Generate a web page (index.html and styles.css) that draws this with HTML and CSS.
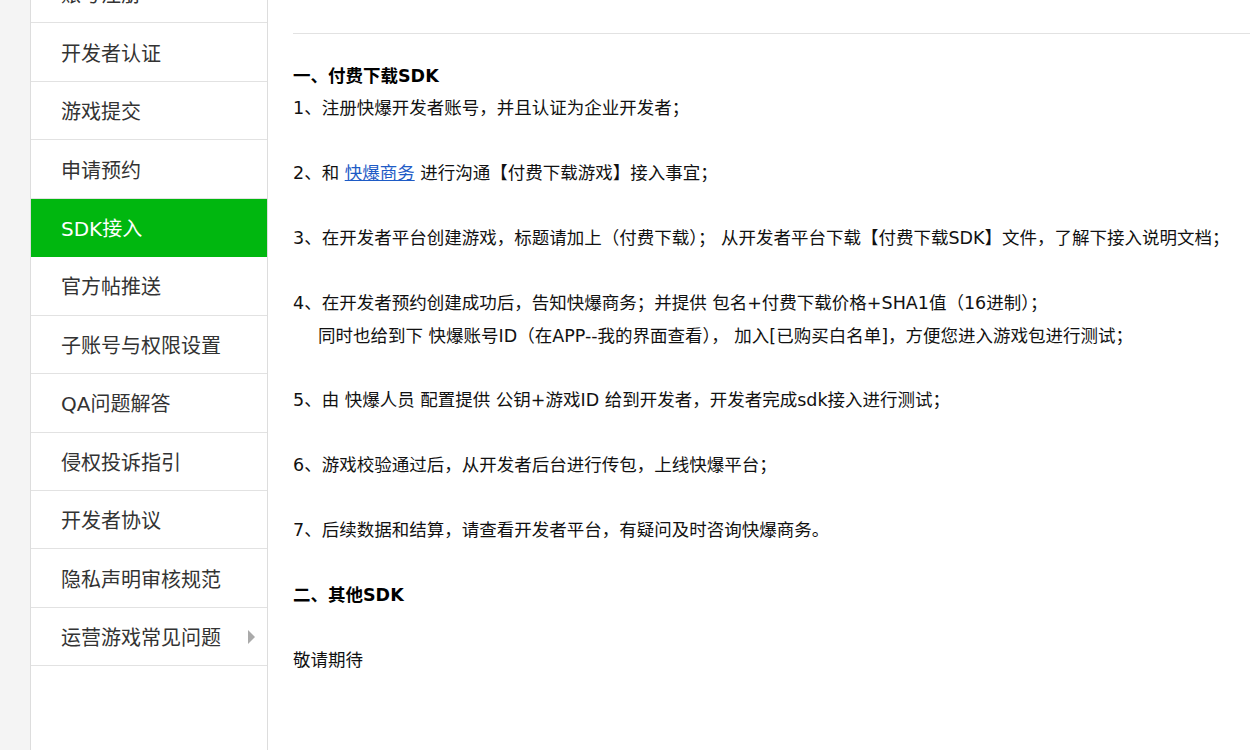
FILE: index.html
```html
<!DOCTYPE html>
<html lang="zh-CN">
<head>
    <meta charset="UTF-8">
    <meta name="viewport" content="width=device-width, initial-scale=1.0">
    <title>SDK接入 - 快爆开发者平台</title>
    <link rel="stylesheet" href="styles.css">
</head>
<body>
    <div class="page">
        <div class="gutter"></div>

        <ul class="side-nav">
            <li class="nav-item">账号注册</li>
            <li class="nav-item">开发者认证</li>
            <li class="nav-item">游戏提交</li>
            <li class="nav-item">申请预约</li>
            <li class="nav-item active">SDK接入</li>
            <li class="nav-item">官方帖推送</li>
            <li class="nav-item">子账号与权限设置</li>
            <li class="nav-item">QA问题解答</li>
            <li class="nav-item">侵权投诉指引</li>
            <li class="nav-item">开发者协议</li>
            <li class="nav-item">隐私声明审核规范</li>
            <li class="nav-item has-sub">运营游戏常见问题 <span class="arrow"></span></li>
        </ul>

        <div class="content">
            <div class="divider"></div>

            <div class="article">
                <p class="title first">一、付费下载SDK</p>
                <p>1、注册快爆开发者账号，并且认证为企业开发者；</p>
                <p>2、和 <a href="#">快爆商务</a> 进行沟通【付费下载游戏】接入事宜；</p>
                <p>3、在开发者平台创建游戏，标题请加上（付费下载）； 从开发者平台下载【付费下载SDK】文件，了解下接入说明文档；</p>
                <p>4、在开发者预约创建成功后，告知快爆商务；并提供 包名+付费下载价格+SHA1值（16进制）；<br>
                    <span class="indent">同时也给到下 快爆账号ID（在APP--我的界面查看）， 加入[已购买白名单]，方便您进入游戏包进行测试；</span></p>
                <p>5、由 快爆人员 配置提供 公钥+游戏ID 给到开发者，开发者完成sdk接入进行测试；</p>
                <p>6、游戏校验通过后，从开发者后台进行传包，上线快爆平台；</p>
                <p>7、后续数据和结算，请查看开发者平台，有疑问及时咨询快爆商务。</p>
                <p class="title">二、其他SDK</p>
                <p>敬请期待</p>
            </div>
        </div>
    </div>
</body>
</html>
```

FILE: styles.css
```css
* {
    margin: 0;
    padding: 0;
    box-sizing: border-box;
}

html, body {
    height: 100%;
    overflow: hidden;
}

body {
    font-family: 'DejaVu Sans', 'Noto Sans CJK SC', sans-serif;
    background: #fff;
    color: #111;
}

/* page is shown scrolled down a little */
.page {
    display: flex;
    margin-top: -35px;
    min-height: calc(100vh + 35px);
}

.gutter {
    width: 30px;
    flex-shrink: 0;
    background: #f4f4f4;
}

.side-nav {
    list-style: none;
    width: 238px;
    flex-shrink: 0;
    border-left: 1px solid #ddd;
    border-right: 1px solid #ddd;
    background: #fff;
}

.nav-item {
    height: 58.45px;
    border-bottom: 1px solid #e2e2e2;
    padding: 0 12px 0 30px;
    display: flex;
    align-items: center;
    justify-content: space-between;
    font-size: 20px;
    color: #333;
    cursor: pointer;
}

.nav-item.active {
    background: #00b70f;
    color: #fff;
    border-bottom-color: #00b70f;
}

.arrow {
    width: 0;
    height: 0;
    border-top: 7px solid transparent;
    border-bottom: 7px solid transparent;
    border-left: 7px solid #aaa;
}

.content {
    flex: 1;
    padding-left: 25px;
    padding-top: 68px;
}

.divider {
    height: 1px;
    background: #e2e2e2;
}

.article {
    padding-top: 26px;
    font-size: 17.5px;
    line-height: 32.45px;
}

.article p {
    margin-bottom: 32.45px;
    white-space: nowrap;
}

.article p.first {
    margin-bottom: 0;
}

.article .title {
    font-weight: bold;
    color: #000;
}

.article a {
    color: #1e5bc6;
    text-decoration: underline;
}

.indent {
    padding-left: 25px;
}
```
